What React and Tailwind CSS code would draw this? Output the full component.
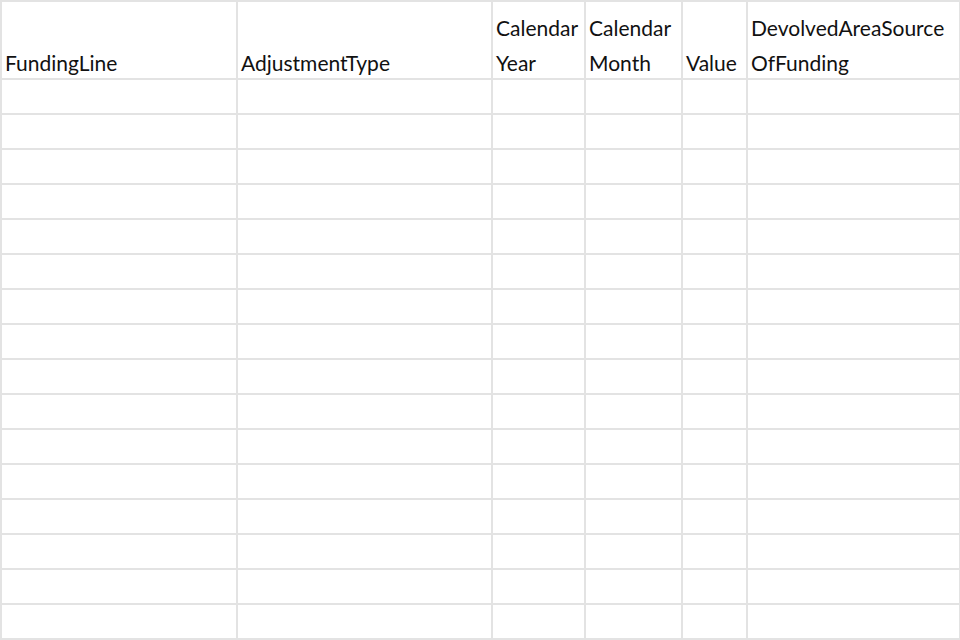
import React from 'react';

const columns = [
  { key: 'fundingLine', lines: ['FundingLine'] },
  { key: 'adjustmentType', lines: ['AdjustmentType'] },
  { key: 'calendarYear', lines: ['Calendar', 'Year'] },
  { key: 'calendarMonth', lines: ['Calendar', 'Month'] },
  { key: 'value', lines: ['Value'] },
  { key: 'devolved', lines: ['DevolvedAreaSource', 'OfFunding'] },
];

const rows = Array.from({ length: 16 }, (_, i) => i);

const App = () => {
  return (
    <div
      className="w-[960px] h-[640px] bg-white overflow-hidden"
      style={{ fontFamily: 'Lato, "Open Sans", sans-serif' }}
    >
      <div className="grid grid-cols-[236px_255px_93px_97px_65px_213px] w-[960px] border-t-2 border-l-2 border-[#e3e3e3]">
        {/* header row */}
        {columns.map(col => (
          <div
            key={col.key}
            className="h-[78px] border-r-2 border-b-2 border-[#e3e3e3] flex flex-col justify-end px-[3px] text-[21px] leading-[35px] text-[#111] whitespace-nowrap"
          >
            {col.lines.map(line => (
              <span key={line} className="translate-y-[2px]">{line}</span>
            ))}
          </div>
        ))}

        {/* empty body rows */}
        {rows.map(r =>
          columns.map(col => (
            <div key={`${r}-${col.key}`} className="h-[35px] border-r-2 border-b-2 border-[#e3e3e3]" />
          ))
        )}
      </div>
    </div>
  );
};

export default App;
